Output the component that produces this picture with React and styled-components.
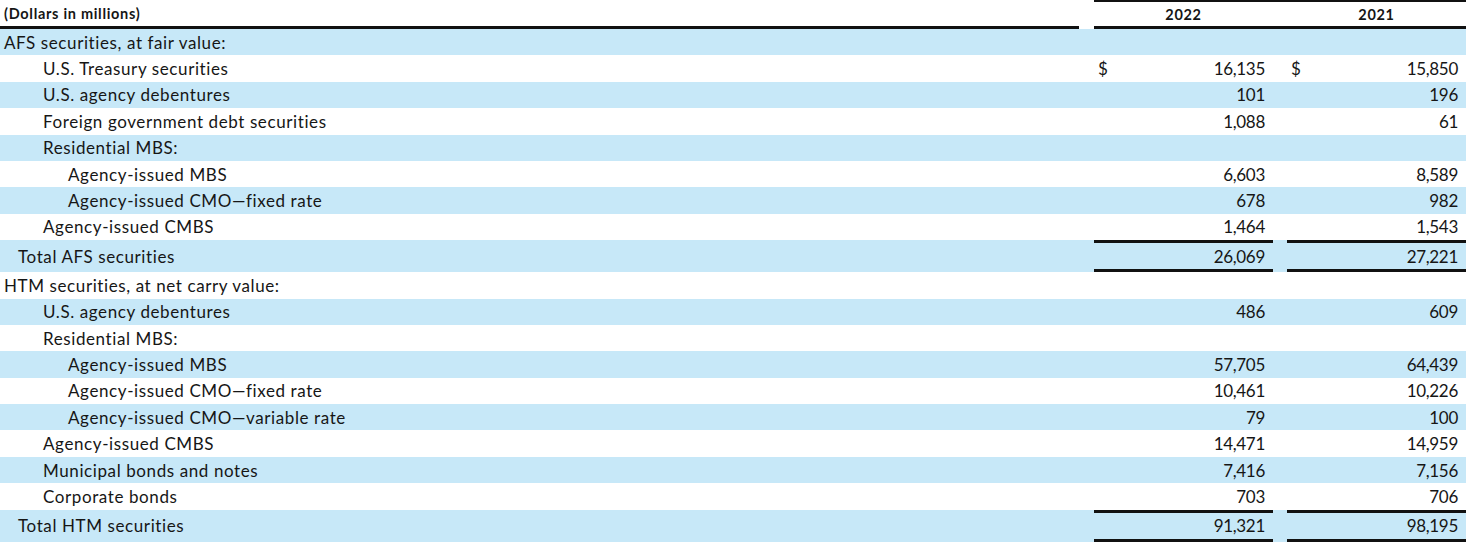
import React from "react";
import styled, { createGlobalStyle } from "styled-components";

const GlobalStyle = createGlobalStyle`
  html, body {
    margin: 0;
    padding: 0;
    background: #ffffff;
  }
  body {
    font-family: Lato, "Open Sans", sans-serif;
    color: #161616;
  }
`;

const Table = styled.div`
  width: 1466px;
  display: flex;
  flex-direction: column;
`;

const Row = styled.div`
  display: grid;
  grid-template-columns: 1079px 15px 179px 14px 179px;
  height: ${(p) => (p.$total ? "32px" : "26.4px")};
  background: ${(p) => (p.$shaded ? "#c7e8f8" : "transparent")};
  align-items: stretch;
`;

const HeadRow = styled.div`
  display: grid;
  grid-template-columns: 1079px 15px 179px 14px 179px;
  height: 29px;
`;

const HeadLabel = styled.div`
  font-size: 14.5px;
  font-weight: 700;
  letter-spacing: 0.7px;
  padding-left: 4px;
  display: flex;
  align-items: center;
  border-bottom: 3px solid #111;
`;

const HeadYear = styled.div`
  font-size: 14.5px;
  font-weight: 700;
  letter-spacing: 0.7px;
  display: flex;
  align-items: center;
  justify-content: center;
  border-top: 2px solid #111;
  border-bottom: 3px solid #111;
  margin-right: ${(p) => (p.$joinRight ? "-14px" : "0")};
  padding-right: ${(p) => (p.$joinRight ? "14px" : "0")};
`;

const Spacer = styled.div``;

const Label = styled.div`
  font-size: 17px;
  letter-spacing: 0.6px;
  display: flex;
  align-items: center;
  padding-left: ${(p) => [4, 43, 68, 18][p.$level]}px;
  white-space: nowrap;
`;

const Amount = styled.div`
  font-size: 17px;
  letter-spacing: -0.3px;
  display: flex;
  align-items: center;
  justify-content: space-between;
  padding: 0 8px 0 4px;
  box-sizing: border-box;
  border-top: ${(p) => (p.$total ? "3px solid #111" : "none")};
  border-bottom: ${(p) => (p.$total ? "3px solid #111" : "none")};
`;

const Footnote = styled.div`
  font-size: 17px;
  letter-spacing: 0.6px;
  color: #555;
  padding: 4px 0 0 4px;
  white-space: nowrap;
`;

const rows = [
  { label: "AFS securities, at fair value:", level: 0 },
  { label: "U.S. Treasury securities", level: 1, a: "16,135", b: "15,850", dollar: true },
  { label: "U.S. agency debentures", level: 1, a: "101", b: "196" },
  { label: "Foreign government debt securities", level: 1, a: "1,088", b: "61" },
  { label: "Residential MBS:", level: 1 },
  { label: "Agency-issued MBS", level: 2, a: "6,603", b: "8,589" },
  { label: "Agency-issued CMO\u2014fixed rate", level: 2, a: "678", b: "982" },
  { label: "Agency-issued CMBS", level: 1, a: "1,464", b: "1,543" },
  { label: "Total AFS securities", level: 3, a: "26,069", b: "27,221", total: true },
  { label: "HTM securities, at net carry value:", level: 0 },
  { label: "U.S. agency debentures", level: 1, a: "486", b: "609" },
  { label: "Residential MBS:", level: 1 },
  { label: "Agency-issued MBS", level: 2, a: "57,705", b: "64,439" },
  { label: "Agency-issued CMO\u2014fixed rate", level: 2, a: "10,461", b: "10,226" },
  { label: "Agency-issued CMO\u2014variable rate", level: 2, a: "79", b: "100" },
  { label: "Agency-issued CMBS", level: 1, a: "14,471", b: "14,959" },
  { label: "Municipal bonds and notes", level: 1, a: "7,416", b: "7,156" },
  { label: "Corporate bonds", level: 1, a: "703", b: "706" },
  { label: "Total HTM securities", level: 3, a: "91,321", b: "98,195", total: true },
];

export default function App() {
  return (
    <>
      <GlobalStyle />
      <Table>
        <HeadRow>
          <HeadLabel>(Dollars in millions)</HeadLabel>
          <Spacer />
          <HeadYear $joinRight>2022</HeadYear>
          <Spacer />
          <HeadYear>2021</HeadYear>
        </HeadRow>
        {rows.map((r, i) => (
          <Row key={i} $shaded={i % 2 === 0} $total={r.total}>
            <Label $level={r.level}>{r.label}</Label>
            <Spacer />
            <Amount $total={r.total}>
              <span>{r.dollar ? "$" : ""}</span>
              <span>{r.a || ""}</span>
            </Amount>
            <Spacer />
            <Amount $total={r.total}>
              <span>{r.dollar ? "$" : ""}</span>
              <span>{r.b || ""}</span>
            </Amount>
          </Row>
        ))}
        <Footnote>Amounts include accrued interest and are presented before allowance.</Footnote>
      </Table>
    </>
  );
}
